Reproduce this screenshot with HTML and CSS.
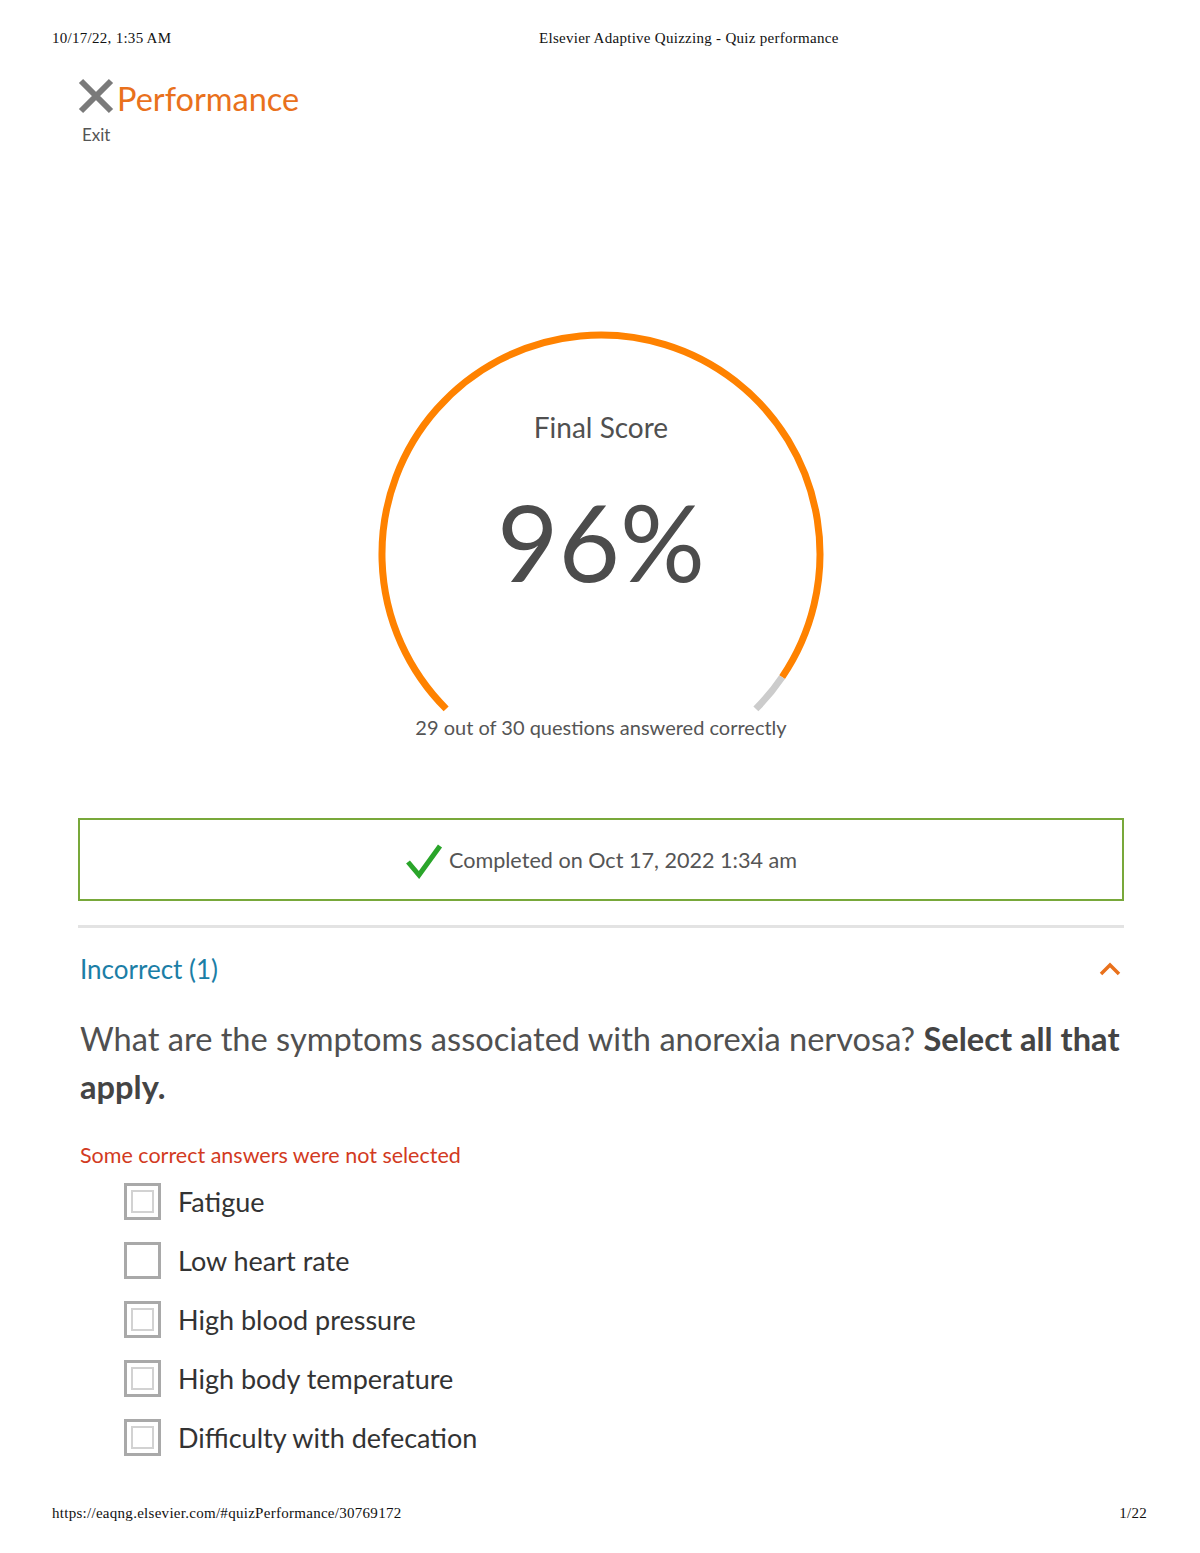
FILE: index.html
```html
<!DOCTYPE html>
<html>
<head>
<meta charset="utf-8">
<link rel="stylesheet" href="styles.css">
<title>Elsevier Adaptive Quizzing - Quiz performance</title>
</head>
<body>
<div class="page">
  <div class="print-header">
    <span class="print-date">10/17/22, 1:35 AM</span>
    <span class="print-title">Elsevier Adaptive Quizzing - Quiz performance</span>
  </div>

  <main class="app">
    <div class="topbar">
      <div class="exit">
        <svg class="exit-icon" viewBox="0 0 36 36" width="36" height="36">
          <path d="M3 3 L33 33 M33 3 L3 33" stroke="#7a7a7a" stroke-width="6" fill="none"/>
        </svg>
        <span class="exit-label">Exit</span>
      </div>
      <h1 class="page-title">Performance</h1>
    </div>

    <section class="gauge">
      <svg class="gauge-ring" width="450" height="450" viewBox="0 0 450 450">
        <path d="M70.14 379.86 A219 219 0 1 1 406.1 348.1" stroke="#ff8200" stroke-width="7" fill="none"/>
        <path d="M406.1 348.1 A219 219 0 0 1 379.86 379.86" stroke="#cccccc" stroke-width="7" fill="none"/>
      </svg>
      <div class="gauge-label">Final Score</div>
      <div class="gauge-value">96%</div>
      <div class="gauge-sub">29 out of 30 questions answered correctly</div>
    </section>

    <div class="completed">
      <svg class="check" viewBox="0 0 38 36" width="38" height="36">
        <path d="M3 19 L14 32 L35 3" stroke="#2aa52a" stroke-width="5" fill="none" stroke-linejoin="miter"/>
      </svg>
      <span>Completed on Oct 17, 2022 1:34 am</span>
    </div>

    <div class="divider"></div>

    <div class="group-head">
      <span class="group-title">Incorrect (1)</span>
      <svg class="chevron" viewBox="0 0 22 14" width="22" height="14">
        <path d="M2 12 L11 3 L20 12" stroke="#e9711c" stroke-width="3.5" fill="none"/>
      </svg>
    </div>

    <p class="question">What are the symptoms associated with anorexia nervosa? <strong>Select all that</strong> <strong>apply.</strong></p>

    <div class="feedback">Some correct answers were not selected</div>

    <ul class="answers">
      <li class="answer"><span class="box checked"></span>Fatigue</li>
      <li class="answer"><span class="box"></span>Low heart rate</li>
      <li class="answer"><span class="box checked"></span>High blood pressure</li>
      <li class="answer"><span class="box checked"></span>High body temperature</li>
      <li class="answer"><span class="box checked"></span>Difficulty with defecation</li>
    </ul>
  </main>

  <div class="print-footer">
    <span>https://eaqng.elsevier.com/#quizPerformance/30769172</span>
    <span>1/22</span>
  </div>
</div>
</body>
</html>
```
FILE: styles.css
```css
* { box-sizing: border-box; }
html, body { margin: 0; padding: 0; background: #fff; }
.page {
  height: 1553px;
  display: flex;
  flex-direction: column;
  font-family: "Lato", "Open Sans", sans-serif;
}
.print-header {
  font-family: "Liberation Serif", serif;
  font-size: 15px;
  line-height: 17px;
  color: #111;
  padding: 30px 0 0 52px;
  display: flex;
  letter-spacing: 0.28px;
}
.print-date { width: 487px; }
.app {
  padding: 0 76px 0 78px;
}
.topbar {
  display: flex;
  align-items: flex-start;
  margin-top: 31px;
}
.exit {
  display: flex;
  flex-direction: column;
  align-items: flex-start;
  width: 39px;
}
.exit-icon { display: block; }
.exit-label {
  font-size: 17px;
  color: #555;
  margin: 11px 0 0 4px;
  line-height: 20px;
}
.page-title {
  margin: 3px 0 0 0;
  font-weight: 400;
  font-size: 32.5px;
  line-height: 36px;
  color: #e9711c;
}
.gauge {
  position: relative;
  width: 450px;
  height: 450px;
  margin: 184px auto 0;
  display: flex;
  flex-direction: column;
  align-items: center;
  text-align: center;
}
.gauge-ring { position: absolute; left: 0; top: 0; }
.gauge-label {
  margin-top: 81px;
  font-size: 28px;
  line-height: 34px;
  color: #505050;
}
.gauge-value {
  margin-top: 42px;
  font-size: 106px;
  line-height: 110px;
  color: #4c4c4c;
}
.gauge-sub {
  margin-top: 119px;
  font-size: 20px;
  line-height: 24px;
  color: #555;
  white-space: nowrap;
}
.completed {
  margin-top: 39px;
  height: 83px;
  border: 2px solid #78a83a;
  display: flex;
  align-items: center;
  justify-content: center;
  gap: 6px;
  font-size: 21.6px;
  color: #555;
}
.check { display: block; margin-top: 2px; }
.divider {
  margin-top: 24px;
  height: 3px;
  background: #e3e3e3;
}
.group-head {
  display: flex;
  justify-content: space-between;
  align-items: center;
  margin-top: 22px;
  padding: 0 3px 0 2px;
}
.group-title {
  font-size: 26px;
  line-height: 38px;
  color: #1b7ea6;
}
.question {
  margin: 27px 0 0 2px;
  font-size: 32.6px;
  line-height: 48px;
  color: #505050;
}
.question strong { color: #444; font-weight: 700; }
.feedback {
  margin: 30px 0 0 2px;
  font-size: 21.5px;
  line-height: 28px;
  color: #d23a22;
}
.answers {
  list-style: none;
  margin: 3px 0 0 0;
  padding: 0 0 0 46px;
}
.answer {
  display: flex;
  align-items: center;
  gap: 17px;
  height: 59px;
  font-size: 27px;
  color: #333;
}
.box {
  width: 37px;
  height: 37px;
  border: 3px solid #a9a9a9;
  background: #fff;
  flex: none;
  position: relative;
}
.box.checked::after {
  content: "";
  position: absolute;
  left: 4px; top: 4px; right: 4px; bottom: 4px;
  border: 2px solid #d2d2d2;
}
.print-footer {
  margin-top: auto;
  margin-bottom: 31px;
  padding: 0 53px 0 52px;
  display: flex;
  justify-content: space-between;
  font-family: "Liberation Serif", serif;
  font-size: 15px;
  line-height: 17px;
  color: #111;
  letter-spacing: 0.28px;
}
```
